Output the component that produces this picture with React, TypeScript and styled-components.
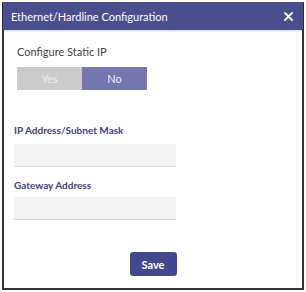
import React, { useState } from 'react';
import styled, { createGlobalStyle } from 'styled-components';

const GlobalStyle = createGlobalStyle`
  body {
    margin: 0;
    background: #ffffff;
    font-family: Lato, "Open Sans", Arial, sans-serif;
  }
`;

const Page = styled.div`
  padding: 2px;
  width: 306px;
  height: 292px;
  box-sizing: border-box;
`;

const Modal = styled.div`
  width: 302px;
  height: 288px;
  box-sizing: border-box;
  border: 2px solid #333333;
  border-top: none;
  display: flex;
  flex-direction: column;
  background: #ffffff;
`;

const Header = styled.div`
  height: 28px;
  margin: 0 -1px;
  padding: 0 10px 0 8px;
  background: #484e8e;
  display: flex;
  align-items: center;
  justify-content: space-between;
  box-shadow: 0 1px 2px rgba(0, 0, 0, 0.18);
`;

const Title = styled.span`
  color: #ffffff;
  font-size: 11px;
`;

const CloseButton = styled.button`
  border: none;
  background: none;
  padding: 0;
  display: flex;
  cursor: pointer;
`;

const Body = styled.div`
  display: flex;
  flex-direction: column;
  padding: 0 10px;
`;

const FieldLabel = styled.label<{ $strong?: boolean; $top: number }>`
  display: block;
  margin-top: ${(p) => p.$top}px;
  font-size: ${(p) => (p.$strong ? '10px' : '11px')};
  line-height: 14px;
  color: ${(p) => (p.$strong ? '#3d4280' : '#444444')};
  font-weight: ${(p) => (p.$strong ? 700 : 400)};
  padding-left: ${(p) => (p.$strong ? '0' : '3px')};
`;

const Toggle = styled.div`
  display: flex;
  margin: 8px 0 0 3px;
`;

const ToggleOption = styled.button<{ $active: boolean }>`
  width: 65px;
  height: 23px;
  border: none;
  padding: 0;
  font-family: inherit;
  font-size: 11px;
  color: ${(p) => (p.$active ? '#eef0fa' : '#eeeeee')};
  background: ${(p) => (p.$active ? '#7377ad' : '#cbcbcb')};
  cursor: pointer;
`;

const TextInput = styled.input<{ $top: number }>`
  width: 162px;
  height: 23px;
  margin-top: ${(p) => p.$top}px;
  box-sizing: border-box;
  border: none;
  border-bottom: 1px solid #d8d8d8;
  background: #f3f3f3;
  padding: 0 6px;
  font-family: inherit;
  font-size: 11px;
  outline: none;
`;

const SaveButton = styled.button`
  align-self: center;
  width: 47px;
  height: 24px;
  margin-top: 32px;
  border: none;
  border-radius: 3px;
  background: #414890;
  color: #ffffff;
  font-family: inherit;
  font-size: 11px;
  font-weight: 700;
  cursor: pointer;
`;

function App() {
  const [isStatic, setIsStatic] = useState<boolean>(false);
  const [ipMask, setIpMask] = useState<string>('');
  const [gateway, setGateway] = useState<string>('');

  return (
    <Page>
      <GlobalStyle />
      <Modal>
        <Header>
          <Title>Ethernet/Hardline Configuration</Title>
          <CloseButton type="button" aria-label="Close">
            <svg width="9" height="9" viewBox="0 0 9 9">
              <path d="M1 1 L8 8 M8 1 L1 8" stroke="#ffffff" strokeWidth="1.9" strokeLinecap="round" />
            </svg>
          </CloseButton>
        </Header>
        <Body>
          <FieldLabel $top={15}>Configure Static IP</FieldLabel>
          <Toggle>
            <ToggleOption type="button" $active={isStatic} onClick={() => setIsStatic(true)}>Yes</ToggleOption>
            <ToggleOption type="button" $active={!isStatic} onClick={() => setIsStatic(false)}>No</ToggleOption>
          </Toggle>

          <FieldLabel $strong $top={33}>IP Address/Subnet Mask</FieldLabel>
          <TextInput $top={7} value={ipMask} onChange={(e) => setIpMask(e.target.value)} />

          <FieldLabel $strong $top={11}>Gateway Address</FieldLabel>
          <TextInput $top={5} value={gateway} onChange={(e) => setGateway(e.target.value)} />

          <SaveButton type="button">Save</SaveButton>
        </Body>
      </Modal>
    </Page>
  );
}

export default App;
